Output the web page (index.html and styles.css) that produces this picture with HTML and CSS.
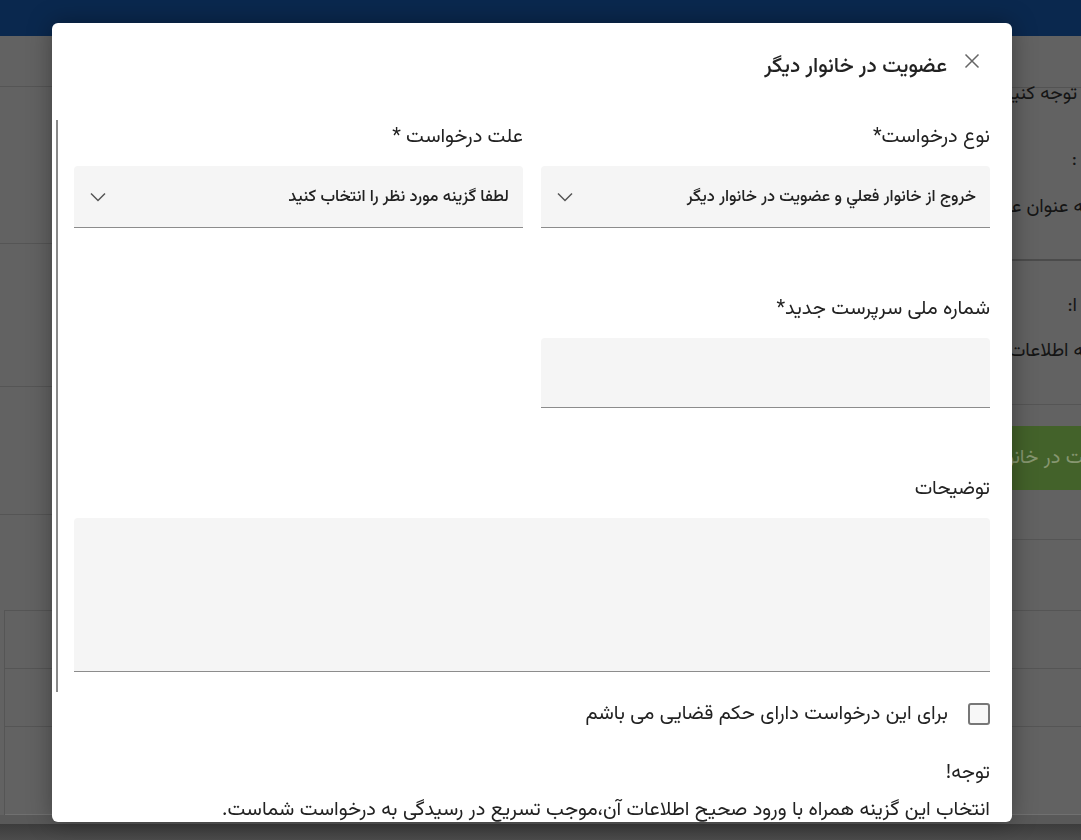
FILE: index.html
```html
<!DOCTYPE html>
<html lang="fa">
<head>
<meta charset="utf-8">
<title>عضویت در خانوار دیگر</title>
<link rel="stylesheet" href="styles.css">
</head>
<body>
<div class="page">
  <header class="topbar"></header>
  <div class="page-body">
    <div class="main-col">
      <div class="crumb"></div>
      <div class="block block-a">
        <p class="bg-text">توجه کنید</p>
        <p class="bg-text">:</p>
        <p class="bg-text cut">به عنوان عضو</p>
      </div>
      <div class="block block-b">
        <p class="bg-text">ا:</p>
        <p class="bg-text cut">به اطلاعات</p>
      </div>
      <div class="block block-c">
        <div class="bg-button"><span class="cut">عضویت در خانوار</span></div>
      </div>
    </div>
    <div class="side-col">
      <div class="side-row r1"></div>
      <div class="side-row r2"></div>
      <div class="side-row r3"></div>
      <div class="side-row r4"></div>
    </div>
  </div>
  <div class="bg-table">
    <div class="bg-tr"></div>
    <div class="bg-tr"></div>
    <div class="bg-tr tall"></div>
  </div>
  <div class="foot-line"></div>
  <div class="bottom-band"></div>
</div>

<div class="backdrop">
  <div class="modal" dir="rtl">
    <div class="modal-head">
      <button class="close" aria-label="بستن">
        <svg width="16" height="16" viewBox="0 0 16 16"><path d="M1.5 1.5 L14.5 14.5 M14.5 1.5 L1.5 14.5" stroke="#666" stroke-width="1.5" fill="none"/></svg>
      </button>
      <h2 class="modal-title">عضویت در خانوار دیگر</h2>
    </div>
    <div class="modal-body">
      <div class="form-grid">
        <div class="field">
          <label class="label">نوع درخواست*</label>
          <div class="select">
            <span class="select-text">خروج از خانوار فعلي و عضويت در خانوار ديگر</span>
            <svg class="chev" width="16" height="10" viewBox="0 0 16 10"><path d="M1 1.5 L8 8.5 L15 1.5" stroke="#555" stroke-width="1.5" fill="none"/></svg>
          </div>
        </div>
        <div class="field">
          <label class="label">علت درخواست *</label>
          <div class="select">
            <span class="select-text">لطفا گزینه مورد نظر را انتخاب کنید</span>
            <svg class="chev" width="16" height="10" viewBox="0 0 16 10"><path d="M1 1.5 L8 8.5 L15 1.5" stroke="#555" stroke-width="1.5" fill="none"/></svg>
          </div>
        </div>
        <div class="field">
          <label class="label">شماره ملی سرپرست جدید*</label>
          <div class="input"></div>
        </div>
        <div class="field wide">
          <label class="label">توضیحات</label>
          <div class="textarea"></div>
        </div>
      </div>
      <div class="check-row">
        <span class="checkbox"></span>
        <span class="check-label">برای این درخواست دارای حکم قضایی می باشم</span>
      </div>
      <p class="note-title">توجه!</p>
      <p class="note-text">انتخاب این گزینه همراه با ورود صحیح اطلاعات آن،موجب تسریع در رسیدگی به درخواست شماست.</p>
    </div>
    <div class="scroll-thumb"></div>
  </div>
</div>
</body>
</html>
```

FILE: styles.css
```css
* { box-sizing: border-box; }
html, body { margin: 0; padding: 0; }
body {
  width: 1081px;
  height: 840px;
  overflow: hidden;
  font-family: "Vazirmatn", "Noto Sans Arabic", "DejaVu Sans", sans-serif;
  background: #616161;
  color: #1e1e1e;
}

/* ---------- background page (already dimmed) ---------- */
.page {
  height: 840px;
  display: flex;
  flex-direction: column;
  background: #626262;
}
.topbar {
  height: 36px;
  background: #0a284e;
  flex: none;
}
.page-body {
  display: flex;
  flex-direction: row-reverse;
  height: 574px;
  flex: none;
}
.main-col {
  width: 560px;
  direction: rtl;
  display: flex;
  flex-direction: column;
}
.side-col {
  flex: 1;
  display: flex;
  flex-direction: column;
}
.crumb { height: 52px; border-bottom: 1px solid #535353; }
.block { border-bottom: 2px solid #4b4b4b; padding-right: 4px; }
.block-a { height: 173px; }
.block-b { height: 144px; border-bottom-width: 1px; border-color: #555; padding-top: 33px; }
.block-c { height: 135px; padding-top: 21px; border-bottom-width: 1px; border-color: #555; }
.bg-text {
  margin: 0;
  font-size: 19px;
  line-height: 26px;
  color: #151515;
  white-space: nowrap;
}
.block-a .bg-text:nth-child(1) { margin-top: -6px; }
.block-a .bg-text:nth-child(2) { margin-top: 40px; }
.block-a .bg-text:nth-child(3) { margin-top: 21px; }
.block-b .bg-text:nth-child(2) { margin-top: 19px; }
.cut { display: inline-block; margin-right: -12px; }
.bg-button {
  height: 64px;
  margin-right: -10px;
  background: #43622a;
  color: #869670;
  font-size: 20px;
  display: flex;
  align-items: center;
  white-space: nowrap;
}
.bg-button .cut { margin-right: -40px; }
.side-row { border-bottom: 1px solid #555; }
.side-row.r1 { height: 51px; }
.side-row.r2 { height: 157px; }
.side-row.r3 { height: 143px; }
.side-row.r4 { height: 128px; }
.bg-table {
  display: flex;
  flex-direction: column;
  border-top: 1px solid #555;
  border-left: 1px solid #555;
  margin-left: 4px;
}
.bg-tr { height: 58px; border-bottom: 1px solid #555; }
.bg-tr.tall { height: 88px; border-bottom-color: #707070; }
.foot-line { height: 9px; background: #595959; flex: none; }
.bottom-band {
  flex: 1;
  background: linear-gradient(#3c3c3c, #4c4c4c);
}

/* ---------- modal ---------- */
.backdrop {
  position: fixed;
  inset: 0;
  display: flex;
  align-items: flex-start;
  padding: 23px 0 0 52px;
}
.modal {
  position: relative;
  width: 960px;
  height: 799px;
  background: #fff;
  border-radius: 6px;
  overflow: hidden;
  box-shadow: 0 0 24px rgba(0, 0, 0, 0.35);
}
.modal-head {
  display: flex;
  align-items: flex-start;
  gap: 16px;
  padding: 30px 31px 0 22px;
  height: 102px;
}
.close {
  border: 0;
  background: none;
  padding: 0;
  width: 18px;
  height: 18px;
  margin-top: -1px;
  display: flex;
  align-items: center;
  justify-content: center;
  cursor: pointer;
}
.modal-title {
  margin: 0;
  font-size: 21px;
  line-height: 28px;
  font-weight: 500;
  color: #222;
}
.modal-body {
  padding: 0 22px;
}
.form-grid {
  display: grid;
  grid-template-columns: 449px 449px;
  column-gap: 18px;
  row-gap: 69px;
}
.field { display: flex; flex-direction: column; gap: 17px; }
.field.wide { grid-column: 1 / span 2; }
.label {
  font-size: 20px;
  line-height: 24px;
  color: #222;
}
.select {
  height: 62px;
  background: #f5f5f5;
  border-bottom: 1px solid #8c8c8c;
  border-radius: 4px 4px 0 0;
  display: flex;
  align-items: center;
  justify-content: space-between;
  padding: 0 14px 0 16px;
}
.select-text {
  font-size: 16.5px;
  font-weight: 500;
  color: #222;
}
.chev { flex: none; }
.input {
  height: 70px;
  background: #f5f5f5;
  border-bottom: 1px solid #8c8c8c;
  border-radius: 4px 4px 0 0;
}
.textarea {
  height: 154px;
  background: #f5f5f5;
  border-bottom: 1px solid #8c8c8c;
  border-radius: 4px 4px 0 0;
}
.check-row {
  display: flex;
  align-items: center;
  gap: 20px;
  margin-top: 31px;
  height: 22px;
}
.checkbox {
  width: 22px;
  height: 22px;
  border: 2px solid #777;
  border-radius: 3px;
  background: #f7f7f7;
  flex: none;
}
.check-label {
  font-size: 20px;
  line-height: 24px;
  color: #222;
}
.note-title {
  margin: 36px 0 0;
  font-size: 20px;
  line-height: 24px;
  color: #222;
}
.note-text {
  margin: 13px 0 0;
  font-size: 20px;
  line-height: 24px;
  color: #222;
  white-space: nowrap;
}
.scroll-thumb {
  position: absolute;
  left: 4px;
  top: 97px;
  width: 2px;
  height: 572px;
  background: #8a8a8a;
}
```
